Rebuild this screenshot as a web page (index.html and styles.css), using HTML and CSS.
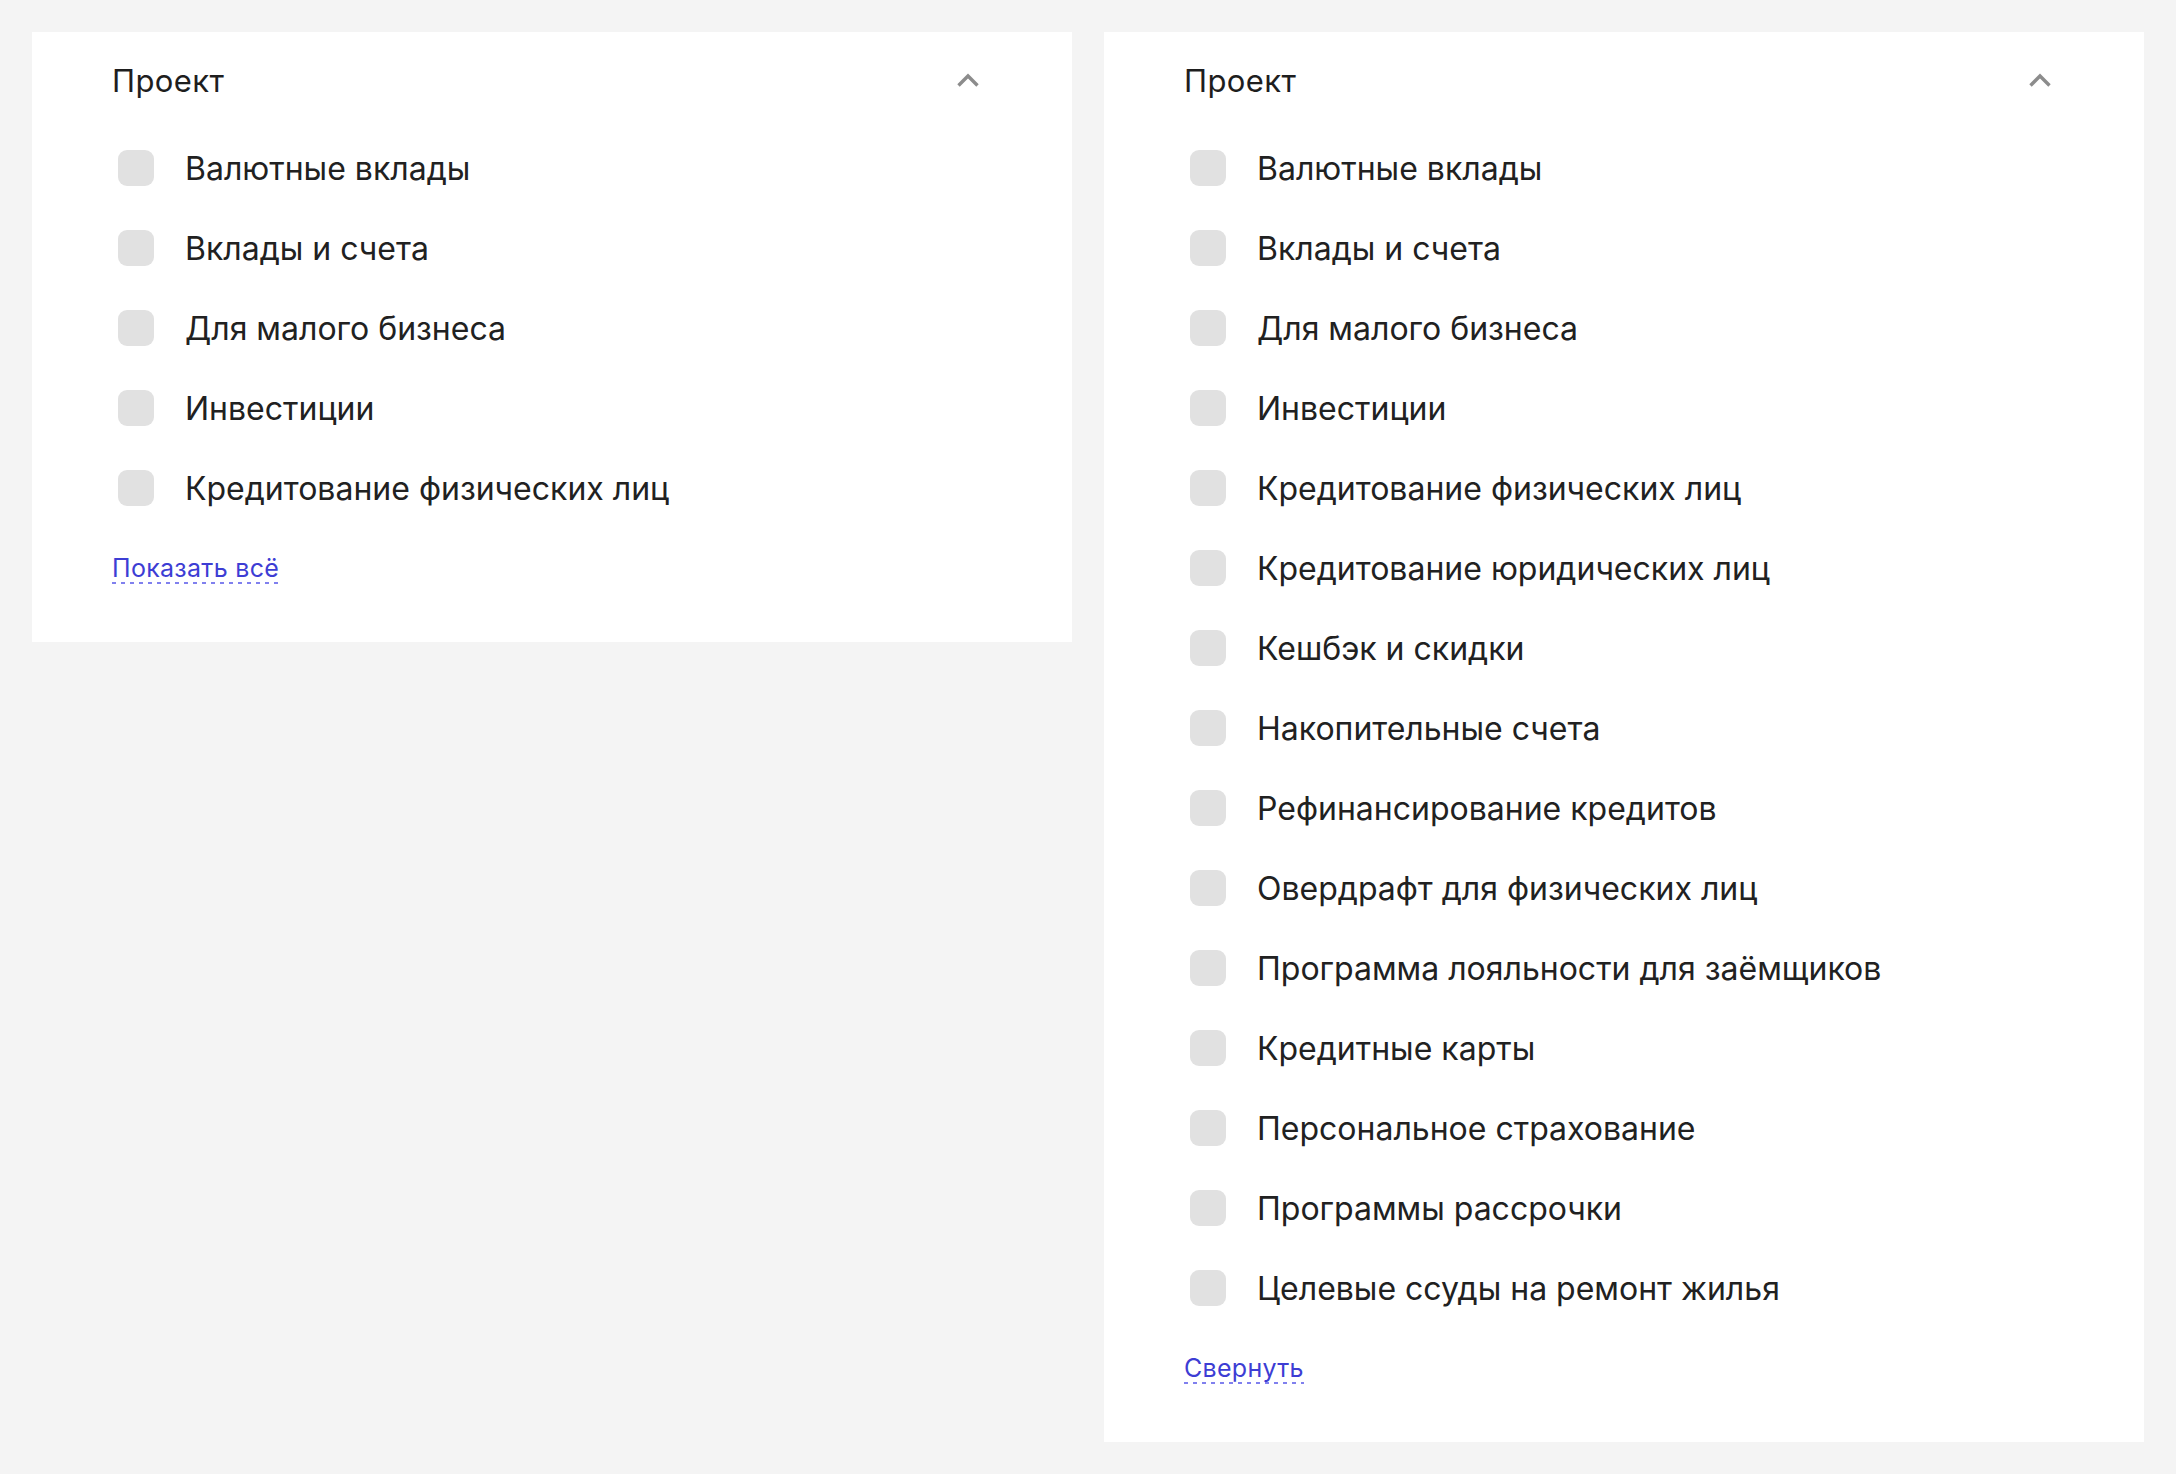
FILE: index.html
```html
<!DOCTYPE html>
<html lang="ru">
<head>
<meta charset="utf-8">
<title>Проект</title>
<link rel="stylesheet" href="styles.css">
</head>
<body>
<div class="page">
  <section class="card">
    <div class="card-header">
      <h2 class="card-title">Проект</h2>
      <svg class="chevron" width="24" height="16" viewBox="0 0 24 16"><polyline points="2.5,13.5 12,4 21.5,13.5" fill="none" stroke="#8c8c8c" stroke-width="3.4"/></svg>
    </div>
    <ul class="options">
      <li class="option"><span class="box"></span><span class="label">Валютные вклады</span></li>
      <li class="option"><span class="box"></span><span class="label">Вклады и счета</span></li>
      <li class="option"><span class="box"></span><span class="label">Для малого бизнеса</span></li>
      <li class="option"><span class="box"></span><span class="label">Инвестиции</span></li>
      <li class="option"><span class="box"></span><span class="label">Кредитование физических лиц</span></li>
    </ul>
    <a class="toggle" href="#">Показать всё</a>
  </section>
  <section class="card">
    <div class="card-header">
      <h2 class="card-title">Проект</h2>
      <svg class="chevron" width="24" height="16" viewBox="0 0 24 16"><polyline points="2.5,13.5 12,4 21.5,13.5" fill="none" stroke="#8c8c8c" stroke-width="3.4"/></svg>
    </div>
    <ul class="options">
      <li class="option"><span class="box"></span><span class="label">Валютные вклады</span></li>
      <li class="option"><span class="box"></span><span class="label">Вклады и счета</span></li>
      <li class="option"><span class="box"></span><span class="label">Для малого бизнеса</span></li>
      <li class="option"><span class="box"></span><span class="label">Инвестиции</span></li>
      <li class="option"><span class="box"></span><span class="label">Кредитование физических лиц</span></li>
      <li class="option"><span class="box"></span><span class="label">Кредитование юридических лиц</span></li>
      <li class="option"><span class="box"></span><span class="label">Кешбэк и скидки</span></li>
      <li class="option"><span class="box"></span><span class="label">Накопительные счета</span></li>
      <li class="option"><span class="box"></span><span class="label">Рефинансирование кредитов</span></li>
      <li class="option"><span class="box"></span><span class="label">Овердрафт для физических лиц</span></li>
      <li class="option"><span class="box"></span><span class="label">Программа лояльности для заёмщиков</span></li>
      <li class="option"><span class="box"></span><span class="label">Кредитные карты</span></li>
      <li class="option"><span class="box"></span><span class="label">Персональное страхование</span></li>
      <li class="option"><span class="box"></span><span class="label">Программы рассрочки</span></li>
      <li class="option"><span class="box"></span><span class="label">Целевые ссуды на ремонт жилья</span></li>
    </ul>
    <a class="toggle" href="#">Свернуть</a>
  </section>
</div>
</body>
</html>
```

FILE: styles.css
```css
* { box-sizing: border-box; }

html, body {
  margin: 0;
  padding: 0;
  background: #f4f4f4;
  font-family: Inter, "Noto Sans", sans-serif;
  color: #212121;
}

.page {
  display: flex;
  align-items: flex-start;
  gap: 32px;
  padding: 32px;
}

.card {
  width: 1040px;
  background: #ffffff;
  padding: 24px 80px 58px 80px;
  display: flex;
  flex-direction: column;
  align-items: flex-start;
}

.card-header {
  width: 100%;
  height: 48px;
  display: flex;
  align-items: center;
  justify-content: space-between;
}

.card-title {
  margin: 0;
  padding-top: 2px;
  font-size: 31px;
  font-weight: 400;
  line-height: 46px;
  letter-spacing: 0.4px;
  color: #1e1e1e;
}

.chevron {
  display: block;
  margin-right: 12px;
}

.options {
  list-style: none;
  margin: 24px 0 0 0;
  padding: 0;
  width: 100%;
}

.option {
  height: 80px;
  display: flex;
  align-items: center;
  padding-left: 6px;
}

.box {
  width: 36px;
  height: 36px;
  border-radius: 9px;
  background: #e1e1e1;
  flex: 0 0 auto;
}

.label {
  margin-left: 31px;
  padding-top: 2px;
  font-size: 32px;
  line-height: 40px;
  color: #212121;
}

.toggle {
  margin-top: 24px;
  display: inline-block;
  font-size: 25px;
  line-height: 32px;
  color: #3d3dd4;
  text-decoration: none;
  letter-spacing: 0.3px;
  background-image: repeating-linear-gradient(to right, #8080ee 0 4px, transparent 4px 9px);
  background-repeat: no-repeat;
  background-size: 100% 2px;
  background-position: left bottom;
}
```
